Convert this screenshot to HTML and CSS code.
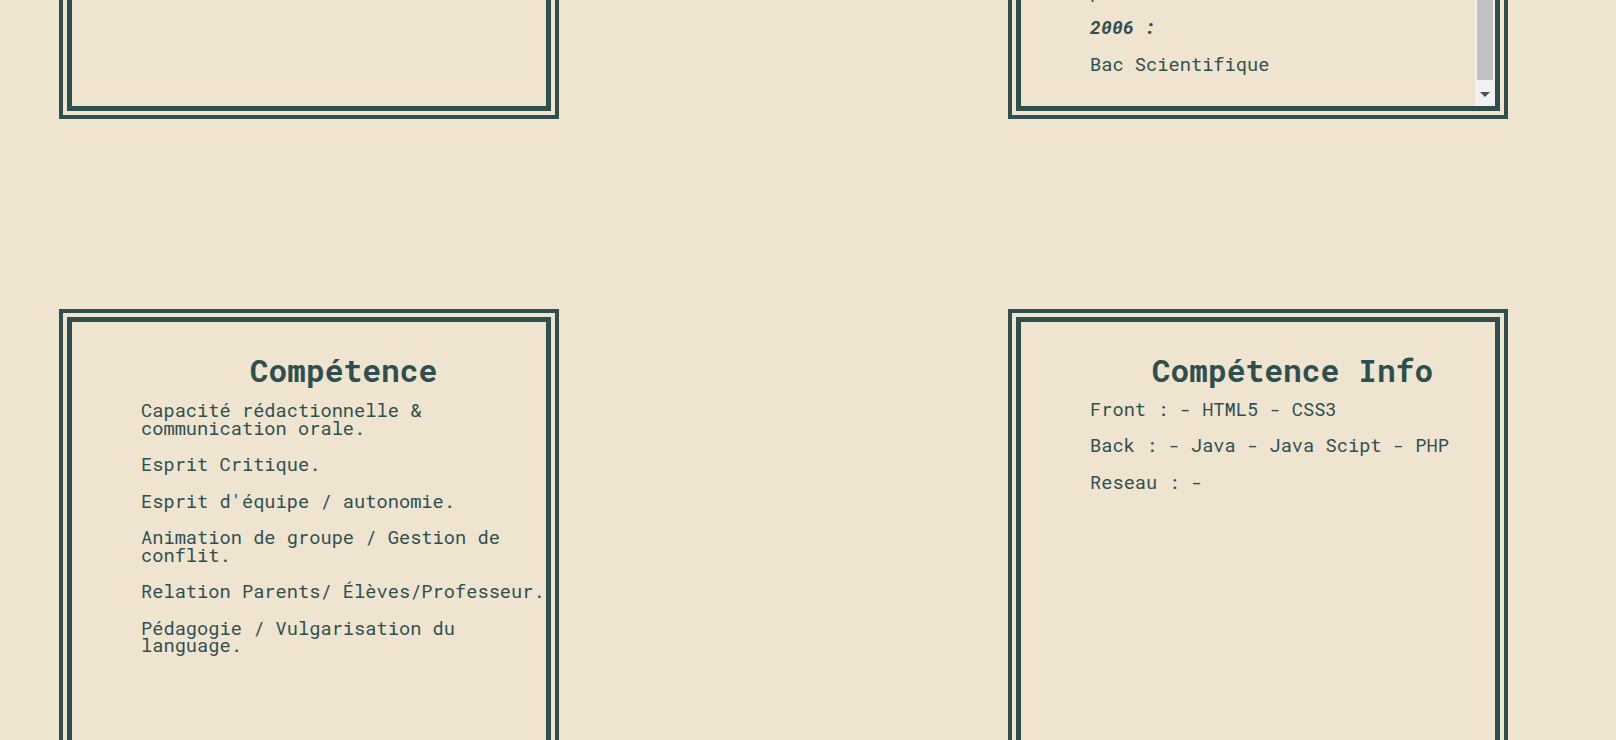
FILE: index.html
```html
<!DOCTYPE html>
<html lang="fr">
<head>
<meta charset="utf-8">
<title>CV</title>
<link rel="stylesheet" href="styles.css">
</head>
<body>
<main class="page">
  <section class="card card--top">
    <div class="card-inner"></div>
  </section>

  <section class="card card--top">
    <div class="card-inner card-inner--scroll">
      <div class="scroll-body content">
        <h2>Formation</h2>
        <p class="year">2012 :</p>
        <p>Licence de Sciences</p>
        <p class="year">2008 :</p>
        <p>premier semestre</p>
        <p class="year">2006 :</p>
        <p>Bac Scientifique</p>
      </div>
      <div class="scrollbar" aria-hidden="true">
        <div class="scrollbar-thumb"></div>
        <div class="scrollbar-button">
          <svg width="10" height="5" viewBox="0 0 10 5"><path d="M0 0h10L5 5z" fill="#505050"/></svg>
        </div>
      </div>
    </div>
  </section>

  <section class="card card--bottom">
    <div class="card-inner content">
      <h2>Compétence</h2>
      <p>Capacité rédactionnelle &amp; communication orale.</p>
      <p>Esprit Critique.</p>
      <p>Esprit d'équipe / autonomie.</p>
      <p>Animation de groupe / Gestion de conflit.</p>
      <p>Relation Parents/ Élèves/Professeur.</p>
      <p>Pédagogie / Vulgarisation du language.</p>
    </div>
  </section>

  <section class="card card--bottom">
    <div class="card-inner content content--info">
      <h2>Compétence Info</h2>
      <p>Front : - HTML5 - CSS3</p>
      <p>Back : - Java - Java Scipt - PHP</p>
      <p>Reseau : -</p>
    </div>
  </section>
</main>
</body>
</html>
```

FILE: styles.css
```css
html, body {
  margin: 0;
  padding: 0;
  background: #efe4d0;
}

body {
  font-family: "Roboto Mono", "DejaVu Sans Mono", "Liberation Mono", monospace;
  color: #2f4f4f;
  overflow: hidden;
}

.page {
  display: grid;
  grid-template-columns: 500px 500px;
  column-gap: 449px;
  row-gap: 190px;
  padding-left: 59px;
  margin-top: -281px;
}

.card {
  box-sizing: border-box;
  border: 4px solid #2f4f4f;
  padding: 4px;
}

.card--top {
  height: 400px;
}

.card--bottom {
  height: 640px;
}

.card-inner {
  box-sizing: border-box;
  height: 100%;
  border: 5px solid #2f4f4f;
}

.card-inner--scroll {
  display: flex;
}

.content {
  padding-left: 69px;
}

.content h2 {
  margin: 32px 0 16px;
  font-size: 31.25px;
  line-height: 1;
  font-weight: bold;
  text-align: center;
}

.content--info h2 {
  margin-bottom: 14.5px;
}

.content p {
  margin: 0 0 19px;
  font-size: 18.7px;
  line-height: 17.5px;
}

.content .year {
  font-weight: bold;
  font-style: italic;
}

.scroll-body {
  flex: 1;
  min-width: 0;
  overflow: hidden;
  display: flex;
  flex-direction: column;
  justify-content: flex-end;
  padding-bottom: 15px;
}

.scroll-body h2,
.scroll-body p {
  flex: none;
}

.scrollbar {
  flex: none;
  width: 20px;
  display: flex;
  flex-direction: column;
  background: #f1f1f1;
}

.scrollbar-thumb {
  flex: 1;
  margin: 0 2px 0 1.5px;
  background: #c1c1c1;
}

.scrollbar-button {
  flex: none;
  height: 26px;
  display: flex;
  justify-content: center;
  align-items: flex-start;
  padding-top: 12px;
  box-sizing: border-box;
}

.scrollbar-button svg {
  display: block;
}
```
